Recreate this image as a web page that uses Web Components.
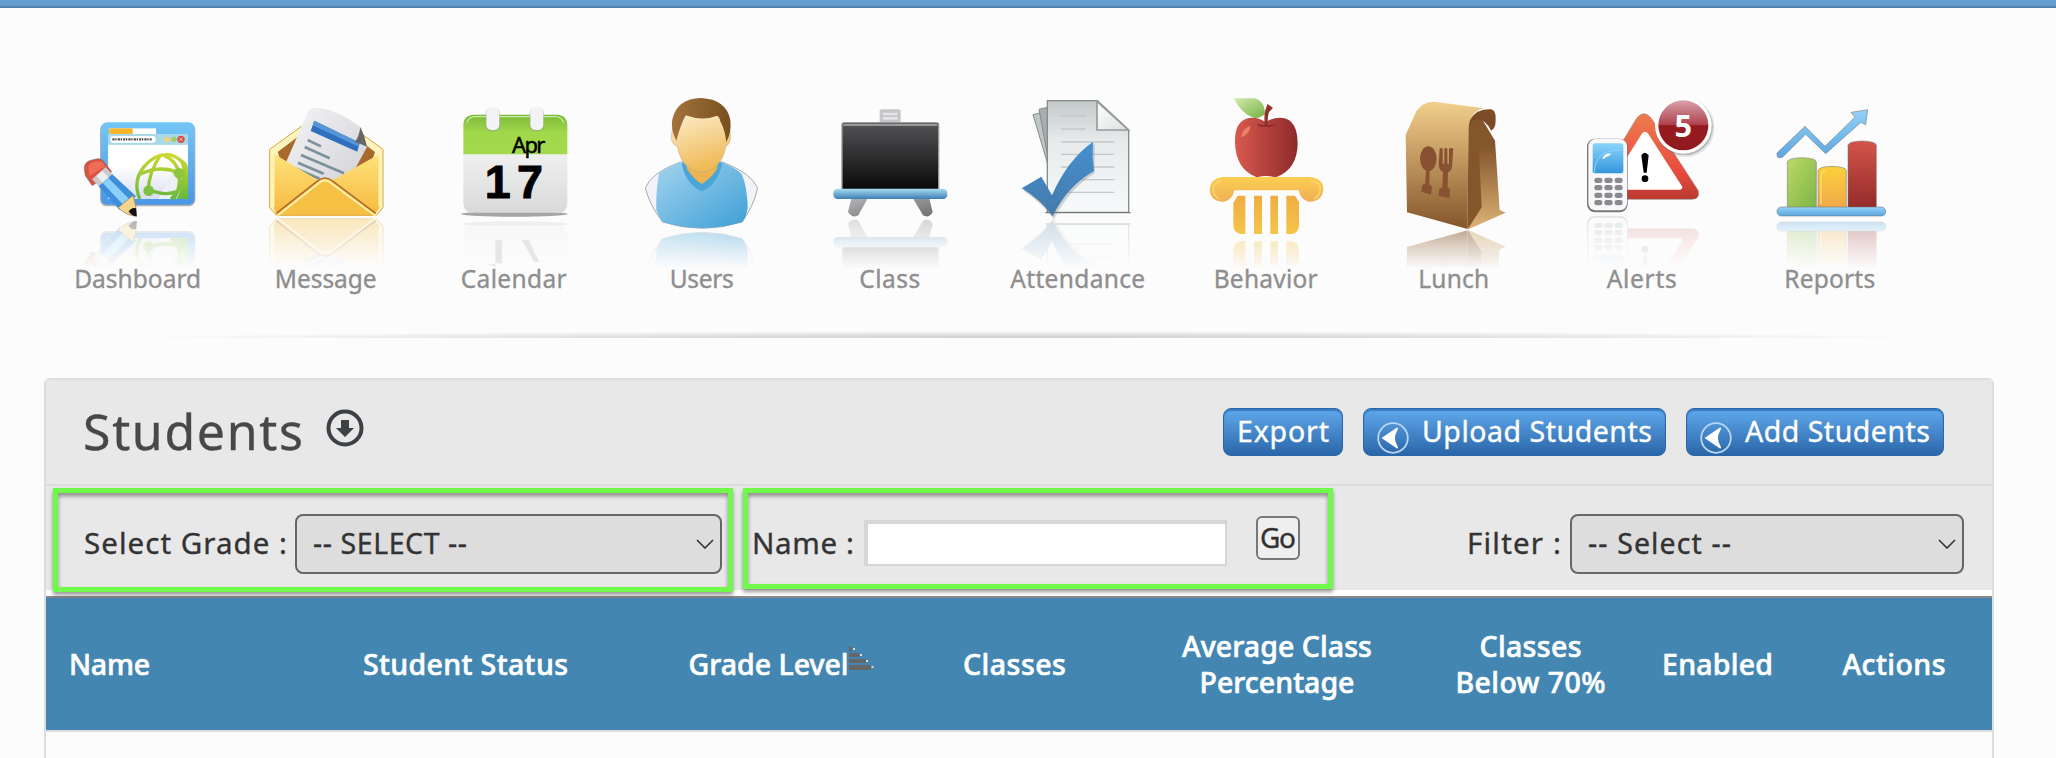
<!DOCTYPE html>
<html lang="en">
<head>
<meta charset="utf-8">
<title>Students</title>
<style>
    html, body {
        margin: 0;
        height: 758px;
        overflow: hidden;
    }
    body {
        background: #fcfcfc;
        font-family: "Noto Sans", "Open Sans", sans-serif;
        color: #333;
    }
</style>
</head>
<body>
<school-page></school-page>

<script>
function attach(host, html) {
    const template = document.createElement('template');
    template.innerHTML = html;
    host.attachShadow({mode: 'open'});
    host.shadowRoot.append(template.content.cloneNode(true));
}

// Line of text tracked out (or in) to a given width
class FitText extends HTMLElement {
    constructor() {
        super();
        attach(this, `
        <style>
            :host {
                display: inline-block;
                white-space: nowrap;
                -webkit-text-stroke: 0.35px currentColor;
            }
            span {
                display: inline-block;
            }
        </style>
        <span><slot></slot></span>
        `);
    }

    connectedCallback() {
        const span = this.shadowRoot.querySelector('span');
        const width = Number(this.getAttribute('width')) + 2;
        const count = this.textContent.length;
        const spacing = (width - span.getBoundingClientRect().width) / (count - 1);
        span.style.letterSpacing = spacing + 'px';
        span.style.marginRight = -spacing + 'px';
    }
}

const ICONS = {
    dashboard: {
        box: '-49 0 564 564', mirror: 416, glow: 0.33,
        art: `
            <linearGradient id="a" x2="0" y2="1"><stop stop-color="#74c6f7"/><stop offset="1" stop-color="#4a97e6"/></linearGradient>
            <linearGradient id="b" x2="0" y2="1"><stop offset=".4" stop-color="#fff"/><stop offset="1" stop-color="#d9dcf0"/></linearGradient>
            <linearGradient id="c" x2="0" y2="1"><stop stop-color="#c9d92f"/><stop offset="1" stop-color="#66b83c"/></linearGradient>
            <rect x="119" y="130" width="286" height="249" rx="20" fill="#777" opacity=".55"/>
            <rect x="122" y="127" width="281" height="247" rx="18" fill="url(#a)"/>
            <rect x="147" y="145" width="140" height="22" fill="#fff"/>
            <rect x="147" y="145" width="70" height="18" fill="#f8b52c"/>
            <rect x="143" y="162" width="240" height="32" fill="#a9d9e6"/>
            <rect x="150" y="168" width="136" height="20" rx="8" fill="#fff"/>
            <path d="M156 178H274" stroke="#555" stroke-width="7" stroke-dasharray="7 2 4 3"/>
            <circle cx="320" cy="178" r="8" fill="#f5cf7a"/><circle cx="341" cy="178" r="8" fill="#9bd05b"/>
            <circle cx="362" cy="178" r="11" fill="#d94a44"/><path d="M357 173l10 10m0-10l-10 10" stroke="#fff" stroke-width="2"/>
            <rect x="143" y="194" width="240" height="163" fill="url(#b)"/>
            <path d="M362 236q21 10 21 30v91h-34q26-48 13-121z" fill="url(#c)"/>
            <path d="M350 250q14 12 10 50-6 36-26 57h-40z" fill="#eef0f8"/>
            <g fill="none" stroke="url(#c)" stroke-width="10">
                <path d="M238 357q-22-56 14-98t80-34q50 16 38 66-10 42-38 66"/>
                <path d="M300 227q-35 50-36 104M240 282q60-28 116-4M312 227q36 14 44 54 6 44-16 76M264 328q46 22 88 6"/>
            </g>
            <circle cx="356" cy="280" r="16" fill="#8cc63a"/><circle cx="265" cy="332" r="16" fill="#7cc242"/>
            <path d="M72 268q-2-22 22-28l19-4q14 0 20 12l21 27-58 42-21-30z" fill="#d9533f" stroke="#666" stroke-opacity=".5" stroke-width="3"/>
            <path d="M84 257q18-17 41-12l10 14-48 30z" fill="#ee6c58"/>
            <path d="M95 298l41-37 21 23-41 36z" fill="#c9c9cb"/><path d="M108 288l18-16 21 22-19 16z" fill="#eee"/>
            <path d="M115 319l41-36 71 66-49 41z" fill="#3d8edb"/><path d="M127 309l17-15 66 67-18 17z" fill="#8bd0fa"/>
            <path d="M173 383l45-37q10 26 11 63-30-2-56-26z" fill="#f4d58b" stroke="#776" stroke-width="2"/>
            <path d="M205 395q8-14 22-10l2 24q-14-2-24-14z" fill="#111"/>`
    },
    message: {
        box: '515 0 564 564', mirror: 411, glow: 0.36,
        art: `
            <linearGradient id="a" x2="0" y2="1"><stop stop-color="#ffe27a"/><stop offset="1" stop-color="#f5b93f"/></linearGradient>
            <linearGradient id="b" x2="1" y2="1"><stop stop-color="#f5f5f7"/><stop offset="1" stop-color="#cdced3"/></linearGradient>
            <path d="M628 208L780 98q18-12 36 0l152 110v175l-20 23H648l-20-23z" fill="#fdf3bd" stroke="#d9a441" stroke-width="3"/>
            <path d="M652 216L790 112q8-6 16 0l138 104-14 42-134 90-130-90z" fill="#a86a2c"/>
            <path d="M762 83q60 0 142 60l16 58-98 180-150-122 64-148q8-30 26-28z" fill="url(#b)"/>
            <path d="M762 122l136 66-7 27-140-62z" fill="#2f6fbd"/><path d="M762 122l136 66-3 12-138-64z" fill="#5595d8"/>
            <path d="M742 180l40 19M733 201l75 34M722 225l129 55M713 248l77 33M708 266l70 30" stroke="#7d919c" stroke-width="8"/>
            <path d="M900 142q14 26 20 58-18-8-36-14 12-16 16-44z" fill="#666"/>
            <path d="M642 222l130 78q22-14 46 0l140-78v160l-16 24H650l-10-20z" fill="url(#a)"/>
            <path d="M650 402l122-96q22-18 44 0l130 96z" fill="#f6c044"/>
            <path d="M650 402l122-96q22-22 44 0l130 96" fill="none" stroke="#fff0a8" stroke-width="6" transform="translate(0 6)"/>
            <path d="M648 400l122-96q24-20 48 0l128 96" fill="none" stroke="#b26a2a" stroke-width="5"/>
            <path d="M638 214v166M959 214v166" stroke="#fff3b4" stroke-width="9"/>`
    },
    calendar: {
        box: '-61 0 564 564', mirror: 417, glow: 0.16,
        art: `
            <linearGradient id="a" x2="0" y2="1"><stop stop-color="#7cb93a"/><stop offset=".45" stop-color="#a0d84b"/><stop offset="1" stop-color="#a2da4b"/></linearGradient>
            <linearGradient id="b" x2="0" y2="1"><stop stop-color="#f0f0f0"/><stop offset="1" stop-color="#d9d9da"/></linearGradient>
            <ellipse cx="222" cy="402" rx="160" ry="8" fill="#888" opacity=".75"/>
            <path d="M69 220h312v148q0 28-26 30H95q-26-2-26-30z" fill="url(#b)"/>
            <path d="M69 223V134q2-28 28-30h256q26 2 28 30v89z" fill="url(#a)"/>
            <path d="M80 128q4-16 22-18h246q16 2 22 18" fill="none" stroke="#c8ecaa" stroke-width="4"/>
            <rect x="136" y="84" width="43" height="70" rx="16" fill="#999" opacity=".5"/><rect x="138" y="82" width="39" height="68" rx="16" fill="#f3f3f6"/>
            <rect x="268" y="84" width="43" height="70" rx="16" fill="#999" opacity=".5"/><rect x="270" y="82" width="39" height="68" rx="16" fill="#f3f3f6"/>`,
        top: `
            <path d="M165 480h20v70h-20zM245 480h20l32 66h-16zM142 552h24v10z" fill="#888" opacity=".17"/>
            <text x="215" y="219" font-size="66" textLength="100" font-family="Noto Sans" fill="#000" stroke="#000" stroke-width="1.5">Apr</text>
            <g font-family="Liberation Sans" font-size="140" font-weight="bold" fill="#000" stroke="#000" stroke-width="3"><text x="133" y="353">1</text><text x="230" y="353">7</text></g>`
    },
    users: {
        box: '503 0 564 564', mirror: 451, glow: 0.4,
        art: `
            <linearGradient id="a" x2="1" y2="1"><stop stop-color="#a4d4ef"/><stop offset="1" stop-color="#3d9fd6"/></linearGradient>
            <linearGradient id="b" x2=".3" y2="1"><stop stop-color="#fdf0d4"/><stop offset="1" stop-color="#efbb58"/></linearGradient>
            <linearGradient id="c" x2="1" y2="0"><stop stop-color="#a5733d"/><stop offset="1" stop-color="#76501f"/></linearGradient>
            <path d="M720 246q-88 32-105 78 14 54 52 102 120 38 238 0 34-46 47-102-20-46-106-78z" fill="#f2f3f8" stroke="#aaa" stroke-width="3"/>
            <path d="M727 244q-54 22-71 36-10 56-8 110 6 18 18 36 116 36 240 0 14-18 16-46-2-62-18-98-12-14-58-36z" fill="url(#a)"/>
            <path d="M724 252q14 62 60 82 46-18 62-82l-14-10H734z" fill="#4aa6d8"/>
            <path d="M734 230l6 36q16 28 44 46 30-18 46-46l6-40z" fill="#ecb551"/>
            <path d="M692 170q10-76 60-78h70q46 4 49 80-2 22-14 26-14 74-74 78-58-4-72-76-18-8-19-30z" fill="url(#b)" stroke="#999" stroke-opacity=".5" stroke-width="2"/>
            <path d="M708 182q-18-34-12-64 14-62 86-64 76 4 88 66 4 38-12 66-4-36-18-62-4-18-12-16-44 16-92-2-16 30-28 76z" fill="url(#c)"/>`
    },
    class: {
        box: '-43 0 564 564', mirror: 414, glow: 0.28,
        art: `
            <linearGradient id="a" x2="0" y2="1"><stop stop-color="#525355"/><stop offset="1" stop-color="#080808"/></linearGradient>
            <linearGradient id="b" x2="0" y2="1"><stop stop-color="#a9dcef"/><stop offset="1" stop-color="#3d7eb4"/></linearGradient>
            <linearGradient id="c" x2="1" y2="1"><stop stop-color="#b5b5b8"/><stop offset="1" stop-color="#6f6f72"/></linearGradient>
            <path d="M124 352h50l-30 54q-18 10-31-10zM356 352h-50l32 54q18 10 29-10z" fill="url(#c)"/>
            <rect x="208" y="88" width="63" height="44" rx="6" fill="#c6c6c8"/><path d="M218 98h44v8h-44zm0 13h44v8h-44z" fill="#e4e4e6"/>
            <rect x="93" y="126" width="294" height="208" rx="10" fill="#99999b"/><rect x="97" y="130" width="286" height="200" fill="url(#a)"/>
            <path d="M99 135h282" stroke="#99999b" stroke-width="6"/>
            <rect x="69" y="326" width="342" height="31" rx="13" fill="url(#b)"/>`
    },
    attendance: {
        box: '521 0 564 564', mirror: 415, glow: 0.25,
        art: `
            <linearGradient id="a" x2="0" y2="1"><stop stop-color="#c3c8c8"/><stop offset=".35" stop-color="#e6eaea"/><stop offset="1" stop-color="#f6fafa"/></linearGradient>
            <linearGradient id="b" x2="0" y2="1"><stop stop-color="#468fd1"/><stop offset="1" stop-color="#437ba9"/></linearGradient>
            <linearGradient id="e" x2="1" y2="1"><stop stop-color="#fff"/><stop offset="1" stop-color="#dde0e0"/></linearGradient>
            <path d="M668 104l24-6 40 220z" fill="#bfc6c6" stroke="#888" stroke-width="3"/>
            <path d="M686 88l26-6 10 200z" fill="#a7afaf" stroke="#888" stroke-width="3"/>
            <path d="M711 62h150l94 87v248H711z" fill="url(#a)" stroke="#878b8b" stroke-width="4"/>
            <path d="M705 398h256" stroke="#777" stroke-width="4"/>
            <path d="M860 64v86h94z" fill="url(#e)" stroke="#979b9b" stroke-width="5"/>
            <path d="M752 108h74M752 147h74M752 186h160M752 223h160M752 261h160M752 299h160M752 337h160" stroke="#c3c8c8" stroke-width="4"/>
            <path d="M640 333l55-35 33 54q45-106 125-160v88q-76 46-122 138-36-48-91-85z" fill="#888" opacity=".35"/>
            <path d="M634 325l59-35 32 56q45-105 123-161-4 44 3 88-80 45-124 136-36-50-93-84z" fill="url(#b)"/>`
    },
    behavior: {
        box: '-25 0 564 564', mirror: 473, glow: 0.36,
        art: `
            <linearGradient id="a" x2="1" y2="0"><stop stop-color="#d8594f"/><stop offset="1" stop-color="#8e2a2a"/></linearGradient>
            <linearGradient id="b" x2="0" y2="1"><stop stop-color="#fbcf52"/><stop offset="1" stop-color="#efae55"/></linearGradient>
            <linearGradient id="c" x2="1" y2="1"><stop stop-color="#d5ebb0"/><stop offset="1" stop-color="#76b244"/></linearGradient>
            <linearGradient id="d" x2="0" y2="1"><stop stop-color="#efad43"/><stop offset="1" stop-color="#f5c549"/></linearGradient>
            <path d="M160 55h62q32 8 32 48-18 14-34 10-34-8-60-58z" fill="url(#c)"/>
            <path d="M256 126q-26-16-50-12-44 8-42 74 2 80 66 104 28-8 56 0 66-24 66-104-2-68-44-74-24-4-52 12z" fill="url(#a)"/>
            <path d="M182 172q4-28 28-34-2 26-28 34z" fill="#ea8463"/>
            <path d="M232 134q26 10 54-2" stroke="#8e2a2a" stroke-width="5" fill="none"/>
            <path d="M254 138q-6-38 8-66l16 12-12 12q-6 18-3 42z" fill="#8e332c"/>
            <path d="M128 291h262q39 4 39 38-4 34-40 36-28-2-34-34H162q-6 32-34 34-38-2-40-36 2-34 40-38z" fill="url(#b)"/>
            <path d="M124 302q-24 4-26 26 4 22 18 28M392 302q26 4 28 26-4 22-18 28" fill="none" stroke="#fbd675" stroke-width="4"/>
            <path d="M172 347h23v115h-14q-20-4-22-24v-70zM221 347h24v115h-24zM270 347h23v115h-23zM318 347h26l12 20v70q-2 22-22 25h-16z" fill="url(#d)"/>`
    },
    lunch: {
        box: '539 0 564 564', mirror: 449, glow: 0.5,
        art: `
            <linearGradient id="a" x2="0" y2="1"><stop stop-color="#f2cf8b"/><stop offset="1" stop-color="#85552b"/></linearGradient>
            <linearGradient id="b" x2="0" y2="1"><stop stop-color="#85552b"/><stop offset=".3" stop-color="#85552b"/><stop offset="1" stop-color="#dcb477"/></linearGradient>
            <path d="M890 92l54 90 14 208 18 8-112 50z" fill="url(#b)"/>
            <path d="M864 130l26-26 14 278-42 66z" fill="#85552b"/>
            <path d="M676 164l32-70q18-28 52-29l152 20q-42 6-48 62l-2 300-182-50z" fill="url(#a)"/>
            <path d="M866 128q16-42 66-40 16 4 14 30 0 30-14 34-22-50-66-24z" fill="#7b4b28"/>
            <g fill="#885232">
                <ellipse cx="744" cy="236" rx="25" ry="37"/><path d="M737 268h11l-1 44 8 8-3 24-29-9 3-20 9-5z"/>
                <path d="M778 205h9v46h5v-46h9v46h5v-46h13l-4 56q-4 14-12 16l-1 44 7 8-2 26-32-8 2-20 9-5 2-46q-12-6-13-22z"/>
            </g>`
    },
    alerts: {
        box: '-37 0 564 564', mirror: 402, glow: 0.18,
        art: `
            <linearGradient id="a" x2="0" y2="1"><stop stop-color="#ee7c4e"/><stop offset=".7" stop-color="#e8493e"/><stop offset="1" stop-color="#b93a31"/></linearGradient>
            <linearGradient id="b" x2="0" y2="1"><stop stop-color="#8bd3fa"/><stop offset="1" stop-color="#3497dc"/></linearGradient>
            <path d="M228 116q22-30 46 0l140 216q6 24-18 26H140V262z" fill="url(#a)" stroke="#888" stroke-opacity=".5" stroke-width="3"/>
            <path d="M244 162q10-14 20 0l102 158q0 8-8 9H150v-18z" fill="#fff"/>
            <path d="M243 226q10-16 22 0l-6 52h-9z" fill="#000"/><circle cx="254" cy="296" r="10" fill="#000"/>
            <rect x="80" y="176" width="122" height="221" rx="24" fill="#777"/><rect x="84" y="177" width="116" height="214" rx="22" fill="#f8f8fa"/>
            <rect x="97" y="190" width="92" height="90" rx="8" fill="url(#b)"/>
            <path d="M102 280q0-72 82-70" fill="none" stroke="#8fd3fa" stroke-width="3"/><path d="M126 236q8-18 26-15-4 8-16 9 0 6-10 6z" fill="#fff"/>
            <g fill="#8a8b8e">
                <rect x="102" y="293" width="24" height="16" rx="7"/><rect x="132" y="293" width="25" height="16" rx="7"/><rect x="163" y="293" width="24" height="16" rx="7"/>
                <rect x="102" y="315" width="24" height="16" rx="7"/><rect x="132" y="315" width="25" height="16" rx="7"/><rect x="163" y="315" width="24" height="16" rx="7"/>
                <rect x="102" y="338" width="24" height="16" rx="7"/><rect x="132" y="338" width="25" height="16" rx="7"/><rect x="163" y="338" width="24" height="16" rx="7"/>
                <rect x="102" y="360" width="24" height="16" rx="7"/><rect x="132" y="360" width="25" height="16" rx="7"/><rect x="163" y="360" width="24" height="16" rx="7"/>
            </g>`,
        top: `
            <linearGradient id="r" x2="0" y2="1"><stop stop-color="#d9a3aa"/><stop offset=".5" stop-color="#ae3f4b"/><stop offset=".5" stop-color="#971b20"/><stop offset="1" stop-color="#8f1a1e"/></linearGradient>
            <circle cx="374" cy="143" r="89" fill="#777" opacity=".16"/><circle cx="372" cy="140" r="86" fill="#777" opacity=".4"/>
            <circle cx="369" cy="136" r="85" fill="#fff"/><circle cx="369" cy="136" r="75" fill="url(#r)"/>
            <text x="369" y="172" font-size="92" font-weight="bold" font-family="Noto Sans" text-anchor="middle" fill="#fff">5</text>`
    },
    reports: {
        box: '527 0 564 564', mirror: 417, glow: 0.32,
        art: `
            <linearGradient id="a" x2="1" y2="1"><stop stop-color="#bcd963"/><stop offset="1" stop-color="#7eb449"/></linearGradient>
            <linearGradient id="b" x2="0" y2="1"><stop stop-color="#fad03c"/><stop offset="1" stop-color="#f0a848"/></linearGradient>
            <linearGradient id="c" x2="0" y2="1"><stop stop-color="#d35549"/><stop offset="1" stop-color="#932b2b"/></linearGradient>
            <linearGradient id="d" x2="0" y2="1"><stop stop-color="#93d2f6"/><stop offset="1" stop-color="#5aa6e2"/></linearGradient>
            <g stroke="#777" stroke-opacity=".55" stroke-width="3">
                <path d="M681 384V246q2-12 44-13 42 1 43 13v138z" fill="url(#a)"/>
                <path d="M773 384V272q2-12 42-13 42 1 43 13v112z" fill="url(#b)"/>
                <path d="M863 384V196q2-12 42-13 42 1 43 13v188z" fill="url(#c)"/>
                <rect x="650" y="381" width="326" height="27" rx="13" fill="url(#d)"/>
                <path d="M650 219l84-80 60 60 90-88-12-14 50-8-6 46-14-8-106 94-60-58-70 69q-18 6-16-13z" fill="url(#d)"/>
            </g>
            <path d="M782 372V290q2-16 14-18" fill="none" stroke="#fbe07a" stroke-width="4"/>`
    }
};

class NavIcon extends HTMLElement {
    constructor() {
        super();
        const icon = ICONS[this.getAttribute('name')];
        attach(this, `
        <style>
            :host {
                display: flex;
                flex-direction: column;
                align-items: center;
                width: 188px;
                color: #8e8e8e;
                font-size: 24.5px;
                line-height: 36px;
            }
            svg {
                display: block;
                width: 188px;
                height: 188px;
                margin-bottom: -7px;
            }
            slot {
                display: block;
                position: relative;
            }
        </style>
        <svg viewBox="${icon.box}">
            <defs>
                <linearGradient id="fade" gradientUnits="userSpaceOnUse" x1="0" x2="0" y1="${icon.mirror}" y2="568">
                    <stop stop-color="#fff" stop-opacity="${icon.glow}"/>
                    <stop offset="1" stop-color="#fff" stop-opacity="0"/>
                </linearGradient>
                <mask id="mask" maskUnits="userSpaceOnUse" x="-100" y="${icon.mirror}" width="1300" height="160">
                    <rect x="-100" y="${icon.mirror}" width="1300" height="160" fill="url(#fade)"/>
                </mask>
            </defs>
            <g id="art">${icon.art}</g>
            <g mask="url(#mask)"><use href="#art" transform="translate(0 ${icon.mirror * 2}) scale(1 -1)"/></g>
            ${icon.top || ''}
        </svg>
        <slot></slot>
        `);
    }
}

class BlueButton extends HTMLElement {
    constructor() {
        super();
        const arrow = this.hasAttribute('arrow') ? `
            <svg viewBox="0 0 32 32">
                <circle cx="16" cy="16" r="14.8" fill="none" stroke="#b9d6f2" stroke-width="1.8"/>
                <path d="M4.500 16L20 5.500q2 0 0 3.500-4 7 0 14 2 4 0 3.500z" fill="#fff"/>
            </svg>` : '';
        attach(this, `
        <style>
            :host {
                box-sizing: border-box;
                display: flex;
                height: 48px;
                padding: 0 13px;
                border: 1px solid #2a66a8;
                border-radius: 8px;
                background: linear-gradient(#60a9ec, #2a66a8);
                box-shadow: inset 0 2px 1px #3a7cc0;
                color: #fff;
                font-size: 28.5px;
                line-height: 45px;
            }
            svg {
                width: 32px;
                height: 32px;
                margin: 13px 13px 0 0;
            }
        </style>
        ${arrow}<slot></slot>
        `);
    }
}

class SelectBox extends HTMLElement {
    constructor() {
        super();
        attach(this, `
        <style>
            :host {
                box-sizing: border-box;
                display: flex;
                align-items: center;
                justify-content: space-between;
                height: 60px;
                padding: 0 6px 0 16px;
                border: 2px solid #666;
                border-radius: 8px;
                background: #ddd;
                font-size: 28.5px;
                line-height: 52px;
            }
            slot {
                display: block;
                margin-top: -3px;
            }
            svg {
                width: 18px;
                height: 10px;
            }
        </style>
        <slot></slot>
        <svg viewBox="0 0 18 10"><path d="M1 1l8 8 8-8" fill="none" stroke="#333" stroke-width="1.6"/></svg>
        `);
    }
}

// Green frame drawn round a group of fields
class MarkedGroup extends HTMLElement {
    constructor() {
        super();
        attach(this, `
        <style>
            :host {
                box-sizing: border-box;
                display: flex;
                align-items: flex-start;
                border: 5px solid #70f84a;
                box-shadow: 0 3px 4px rgba(0, 0, 0, 0.4), inset 0 3px 4px rgba(0, 0, 0, 0.4);
                z-index: 1;
            }
        </style>
        <slot></slot>
        `);
    }
}

class TableHead extends HTMLElement {
    constructor() {
        super();
        attach(this, `
        <style>
            :host {
                display: grid;
                grid-template-columns: 273px 293px 313px 179px 346px 161px 213px 140px;
                align-items: center;
                justify-items: center;
                box-sizing: border-box;
                height: 136px;
                border-top: 2px solid #888;
                border-bottom: 2px solid #ddd;
                background: #4386b2;
                color: #fff;
                font-size: 28.5px;
                font-weight: 500;
                line-height: 36px;
            }
            fit-text {
                -webkit-text-stroke-width: 0.6px;
            }
            div {
                display: flex;
                flex-direction: column;
                align-items: center;
                position: relative;
            }
            .first {
                justify-self: start;
                margin-left: 23px;
            }
            svg {
                position: absolute;
                left: 100%;
                top: 1px;
                width: 25px;
                height: 24px;
            }
        </style>
        <div class="first"><fit-text width="79">Name</fit-text></div>
        <div><fit-text width="203">Student Status</fit-text></div>
        <div>
            <fit-text width="158">Grade Level</fit-text>
            <svg viewBox="0 0 25 24">
                <path d="M0 0h3v4H0zM0 6h10v4H0zM0 12h17v4H0zM0 18h22v5H0z" fill="#666"/>
                <path d="M4 1h2v2H4zM11 7h2v2h-2zM17 13h2v2h-2zM22.500 19h2v2h-2z" fill="#ddd"/>
            </svg>
        </div>
        <div><fit-text width="101">Classes</fit-text></div>
        <div><fit-text width="188">Average Class</fit-text><fit-text width="153">Percentage</fit-text></div>
        <div><fit-text width="100">Classes</fit-text><fit-text width="148">Below 70%</fit-text></div>
        <div><fit-text width="109">Enabled</fit-text></div>
        <div><fit-text width="101">Actions</fit-text></div>
        `);
    }
}

class SchoolPage extends HTMLElement {
    constructor() {
        super();
        attach(this, `
        <style>
            :host {
                display: block;
                height: 758px;
                overflow: hidden;
            }
            header {
                height: 8px;
                background: linear-gradient(#659dcf 60%, #4a76a2);
            }
            nav {
                display: flex;
                padding: 72px 0 0 43.7px;
            }
            .divider {
                height: 7px;
                margin: 34px 120px 40px;
                background: radial-gradient(ellipse 50% 100% at 50% 100%, #d2d2d2, #dcdcdc 40%, transparent);
            }
            .panel {
                box-sizing: border-box;
                width: 1950px;
                height: 400px;
                margin-left: 44px;
                border: 2px solid #ddd;
                border-radius: 6px 6px 0 0;
            }
            .title, .filters {
                box-sizing: border-box;
                display: flex;
                background: #e8e8e8;
            }
            .title {
                align-items: center;
                height: 104px;
                padding: 0 48px 0 37px;
                gap: 20px;
            }
            h1 {
                margin: -3px 0 0;
                font-size: 50px;
                font-weight: normal;
                line-height: 70px;
                color: #484848;
            }
            .down {
                width: 38px;
                height: 38px;
                margin: -8px auto 0 3px;
            }
            .filters {
                align-items: flex-start;
                height: 106px;
                padding: 4px 28px 0 7px;
                border-top: 2px solid #dcdcdc;
                box-shadow: 0 6px #fff;
                font-size: 29.5px;
                line-height: 60px;
            }
            .filters > * {
                margin-top: -2px;
            }
            .grade {
                width: 680px;
                height: 104px;
                padding: 20px 0 0 26px;
            }
            .name {
                width: 590px;
                height: 101px;
                margin-left: 10px;
                padding: 20px 0 0 4px;
            }
            .grade select-box {
                width: 427px;
                margin: 1px 0 0 8px;
            }
            input {
                box-sizing: border-box;
                width: 363px;
                height: 46px;
                margin: 7px 0 0 10px;
                border: solid #d5d6d6;
                border-width: 4px 2px 2px 4px;
                border-radius: 0;
                background: #fff;
            }
            .go {
                box-sizing: border-box;
                width: 44px;
                height: 44px;
                margin: 3px 0 0 29px;
                border: 2px solid #777;
                border-radius: 6px;
                background: #efefef;
                font-size: 28px;
                line-height: 39px;
                text-align: center;
            }
            .filter {
                display: flex;
                margin: 23px 0 0 auto;
            }
            .filter select-box {
                width: 394px;
                margin: 1px 0 0 9px;
            }
            table-head {
                margin-top: 6px;
            }
        </style>
        <header></header>
        <nav>
            <nav-icon name="dashboard"><fit-text width="125">Dashboard</fit-text></nav-icon>
            <nav-icon name="message"><fit-text width="100">Message</fit-text></nav-icon>
            <nav-icon name="calendar"><fit-text width="104">Calendar</fit-text></nav-icon>
            <nav-icon name="users"><fit-text width="62">Users</fit-text></nav-icon>
            <nav-icon name="class"><fit-text width="59">Class</fit-text></nav-icon>
            <nav-icon name="attendance"><fit-text width="133">Attendance</fit-text></nav-icon>
            <nav-icon name="behavior"><fit-text width="102">Behavior</fit-text></nav-icon>
            <nav-icon name="lunch"><fit-text width="69">Lunch</fit-text></nav-icon>
            <nav-icon name="alerts"><fit-text width="68">Alerts</fit-text></nav-icon>
            <nav-icon name="reports"><fit-text width="89">Reports</fit-text></nav-icon>
        </nav>
        <div class="divider"></div>
        <section class="panel">
            <div class="title">
                <h1><fit-text width="218">Students</fit-text></h1>
                <svg class="down" viewBox="0 0 38 38">
                    <circle cx="19" cy="19" r="16.500" fill="none" stroke="#3d4145" stroke-width="4"/>
                    <path d="M15 11h8v8h5l-9 9-9-9h5z" fill="#3d4145"/>
                </svg>
                <blue-button><fit-text width="90">Export</fit-text></blue-button>
                <blue-button arrow><fit-text width="228">Upload Students</fit-text></blue-button>
                <blue-button arrow><fit-text width="183">Add Students</fit-text></blue-button>
            </div>
            <div class="filters">
                <marked-group class="grade">
                    <fit-text width="201">Select Grade :</fit-text>
                    <select-box><fit-text width="152">-- SELECT --</fit-text></select-box>
                </marked-group>
                <marked-group class="name">
                    <fit-text width="100">Name :</fit-text>
                    <input type="text">
                    <div class="go"><fit-text width="34">Go</fit-text></div>
                </marked-group>
                <div class="filter">
                    <fit-text width="92">Filter :</fit-text>
                    <select-box><fit-text width="141">-- Select --</fit-text></select-box>
                </div>
            </div>
            <table-head></table-head>
        </section>
        `);
    }
}

customElements.define('school-page', SchoolPage);
customElements.define('nav-icon', NavIcon);
customElements.define('blue-button', BlueButton);
customElements.define('select-box', SelectBox);
customElements.define('marked-group', MarkedGroup);
customElements.define('table-head', TableHead);
customElements.define('fit-text', FitText);
</script>
</body>
</html>
